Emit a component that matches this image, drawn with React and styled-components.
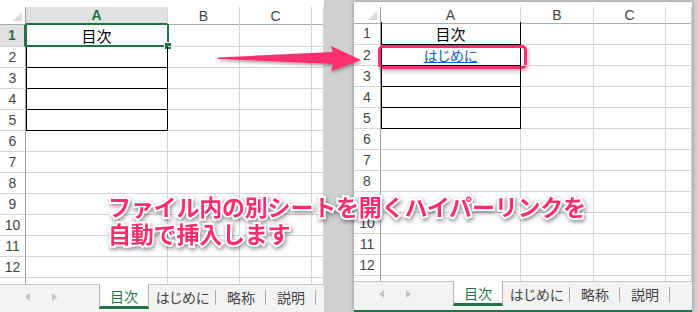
import React from 'react';
import styled, { createGlobalStyle, css } from 'styled-components';

const GREEN = '#217346';
const PINK = '#ff2d6e';
const GRID = '#d4d4d4';
const JP = '"Noto Sans CJK JP", "Liberation Sans", sans-serif';

const GlobalStyle = createGlobalStyle`
  html, body { margin:0; padding:0; }
  body {
    width:697px;
    height:312px;
    overflow:hidden;
    background:#d0d0d0;
    font-family:"Liberation Sans", "Noto Sans CJK JP", sans-serif;
  }
`;

const Page = styled.div`
  position:relative;
  width:697px;
  height:312px;
  display:flex;
  align-items:flex-start;
  gap:30px;
  background:#d0d0d0;
  overflow:hidden;
`;

const Window = styled.section`
  width:${p => p.$width}px;
  height:${p => p.$height}px;
  margin-top:${p => p.$top}px;
  flex-shrink:0;
  background:#fff;
  display:flex;
  flex-direction:column;
  overflow:hidden;
  ${p => p.$raised && css`box-shadow:0 0 4px rgba(0,0,0,.35);`}
`;

const HeaderRow = styled.div`
  display:grid;
  grid-template-columns:${p => p.$cols};
  height:${p => p.$height}px;
  padding-top:${p => p.$pad}px;
  box-sizing:border-box;
`;

const Corner = styled.div`
  position:relative;
  border-right:1px solid #9e9e9e;
  border-bottom:1px solid #ababab;
  &::after {
    content:'';
    position:absolute;
    right:3px;
    bottom:3px;
    border-style:solid;
    border-width:0 0 9px 9px;
    border-color:transparent transparent #dadada transparent;
  }
`;

const ColHead = styled.div`
  display:flex;
  align-items:center;
  justify-content:center;
  font-size:14px;
  color:#444;
  border-right:1px solid ${GRID};
  border-bottom:1px solid #ababab;
  ${p => p.$selected && css`
    background:#e1e1e1;
    color:${GREEN};
    font-weight:700;
    border-bottom:2px solid ${GREEN};
  `}
`;

const Body = styled.div`
  flex:1;
  display:grid;
  grid-template-columns:${p => p.$cols};
  grid-template-rows:23px repeat(11, 21px) 21px;
  overflow:hidden;
`;

const RowHead = styled.div`
  display:flex;
  align-items:center;
  justify-content:center;
  font-size:14px;
  color:#444;
  border-right:1px solid #9e9e9e;
  border-bottom:1px solid ${GRID};
  box-sizing:border-box;
  ${p => p.$selected && css`
    background:#e1e1e1;
    color:${GREEN};
    font-weight:700;
    border-right:2px solid ${GREEN};
  `}
`;

const Cell = styled.div`
  position:relative;
  display:flex;
  align-items:center;
  justify-content:center;
  font-family:${JP};
  font-size:15px;
  color:#000;
  border-right:1px solid ${GRID};
  border-bottom:1px solid ${GRID};
  box-sizing:border-box;
  ${p => p.$boxed && css`
    border-right-color:#000;
    border-bottom-color:#000;
    box-shadow:inset 1px 0 0 #000;
  `}
`;

const Link = styled.span`
  font-size:14px;
  color:#0563c1;
  text-decoration:underline;
  font-feature-settings:"palt";
`;

const Selection = styled.div`
  position:absolute;
  left:-1px;
  top:-1px;
  right:-2px;
  bottom:-1px;
  border:2px solid ${GREEN};
  &::after {
    content:'';
    position:absolute;
    right:-5px;
    bottom:-5px;
    width:6px;
    height:6px;
    background:${GREEN};
    border:1px solid #fff;
  }
`;

const Highlight = styled.div`
  position:absolute;
  left:-3px;
  top:0;
  right:-7px;
  bottom:-4px;
  border:3px solid ${PINK};
  border-radius:5px;
  box-shadow:1px 2px 4px rgba(0,0,0,.3);
`;

const TabBar = styled.div`
  height:25px;
  display:flex;
  align-items:stretch;
  background:#f3f3f3;
  border-top:1px solid #c6c6c6;
  box-sizing:border-box;
  flex-shrink:0;
`;

const Nav = styled.div`
  width:99px;
  display:flex;
  align-items:center;
  gap:22px;
  padding-left:25px;
  box-sizing:border-box;
`;

const Arrow = styled.span`
  width:0;
  height:0;
  border-top:4px solid transparent;
  border-bottom:4px solid transparent;
  ${p => p.$dir === 'left'
    ? css`border-right:5px solid #c3c3c3;`
    : css`border-left:5px solid #c3c3c3;`}
`;

const Tab = styled.div`
  width:${p => p.$width}px;
  display:flex;
  align-items:center;
  justify-content:center;
  font-family:${JP};
  font-feature-settings:"palt";
  font-size:14px;
  color:#444;
  box-sizing:border-box;
  position:relative;
  ${p => p.$active ? css`
    margin-top:-1px;
    background:#fff;
    color:${GREEN};
    border-left:1px solid #b5b5b5;
    border-right:1px solid #b5b5b5;
    border-bottom:3px solid ${GREEN};
    padding-top:2px;
  ` : css`
    &::after {
      content:'';
      position:absolute;
      right:0;
      top:5px;
      bottom:4px;
      width:1px;
      background:#a8a8a8;
    }
  `}
`;

const Footer = styled.div`
  height:${p => p.$height}px;
  background:#f3f3f3;
  flex-shrink:0;
  ${p => p.$status && css`border-bottom:2px solid ${GREEN};`}
`;

const Pointer = styled.svg`
  position:absolute;
  left:210px;
  top:38px;
  overflow:visible;
`;

const Caption = styled.div`
  position:absolute;
  left:108px;
  top:193px;
  font-family:${JP};
  font-weight:700;
  font-size:23px;
  line-height:27px;
  letter-spacing:-0.2px;
  color:${PINK};
  -webkit-text-stroke:4px #fff;
  paint-order:stroke fill;
  filter:drop-shadow(1px 2px 2px rgba(0,0,0,.45));
  white-space:nowrap;
`;

const LETTERS = ['A', 'B', 'C', ''];
const ROWS = [1, 2, 3, 4, 5, 6, 7, 8, 9, 10, 11, 12, ''];

function Sheet({ cols, headerHeight, headerPad, selected, linked }) {
  return (
    <>
      <HeaderRow $cols={cols} $height={headerHeight} $pad={headerPad}>
        <Corner />
        {LETTERS.map((l, i) => (
          <ColHead key={i} $selected={selected && i === 0}>{l}</ColHead>
        ))}
      </HeaderRow>
      <Body $cols={cols}>
        {ROWS.map((r, ri) => (
          <React.Fragment key={ri}>
            <RowHead $selected={selected && r === 1}>{r}</RowHead>
            {LETTERS.map((_, ci) => {
              const boxed = ci === 0 && ri < 5;
              return (
                <Cell key={ci} $boxed={boxed}>
                  {ci === 0 && r === 1 && '目次'}
                  {ci === 0 && r === 2 && linked && <Link>はじめに</Link>}
                  {ci === 0 && r === 1 && selected && <Selection />}
                  {ci === 0 && r === 2 && linked && <Highlight />}
                </Cell>
              );
            })}
          </React.Fragment>
        ))}
      </Body>
    </>
  );
}

function Tabs() {
  return (
    <TabBar>
      <Nav>
        <Arrow $dir="left" />
        <Arrow $dir="right" />
      </Nav>
      <Tab $active $width={50}>目次</Tab>
      <Tab $width={67}>はじめに</Tab>
      <Tab $width={50}>略称</Tab>
      <Tab $width={50}>説明</Tab>
    </TabBar>
  );
}

export default function App() {
  return (
    <Page>
      <GlobalStyle />
      <Window $width={324} $height={312} $top={0}>
        <Sheet cols="26px 142px 72px 72px 1fr" headerHeight={24} headerPad={7} selected />
        <Tabs />
        <Footer $height={3} />
      </Window>
      <Window $width={338} $height={310} $top={2} $raised>
        <Sheet cols="27px 140px 73px 72px 1fr" headerHeight={20} headerPad={5} linked />
        <Tabs />
        <Footer $height={4} $status />
      </Window>
      <Pointer width="160" height="40" viewBox="0 0 160 40">
        <defs>
          <filter id="shade" x="-10%" y="-50%" width="130%" height="200%">
            <feDropShadow dx="1" dy="2" stdDeviation="1.5" floodColor="#000" floodOpacity="0.35" />
          </filter>
        </defs>
        <polygon
          points="8,19.5 123,14 121,8 151,22 121,33 123,26 8,21"
          fill={PINK}
          filter="url(#shade)"
        />
      </Pointer>
      <Caption>
        ファイル内の別シートを開くハイパーリンクを<br />
        自動で挿入します
      </Caption>
    </Page>
  );
}
